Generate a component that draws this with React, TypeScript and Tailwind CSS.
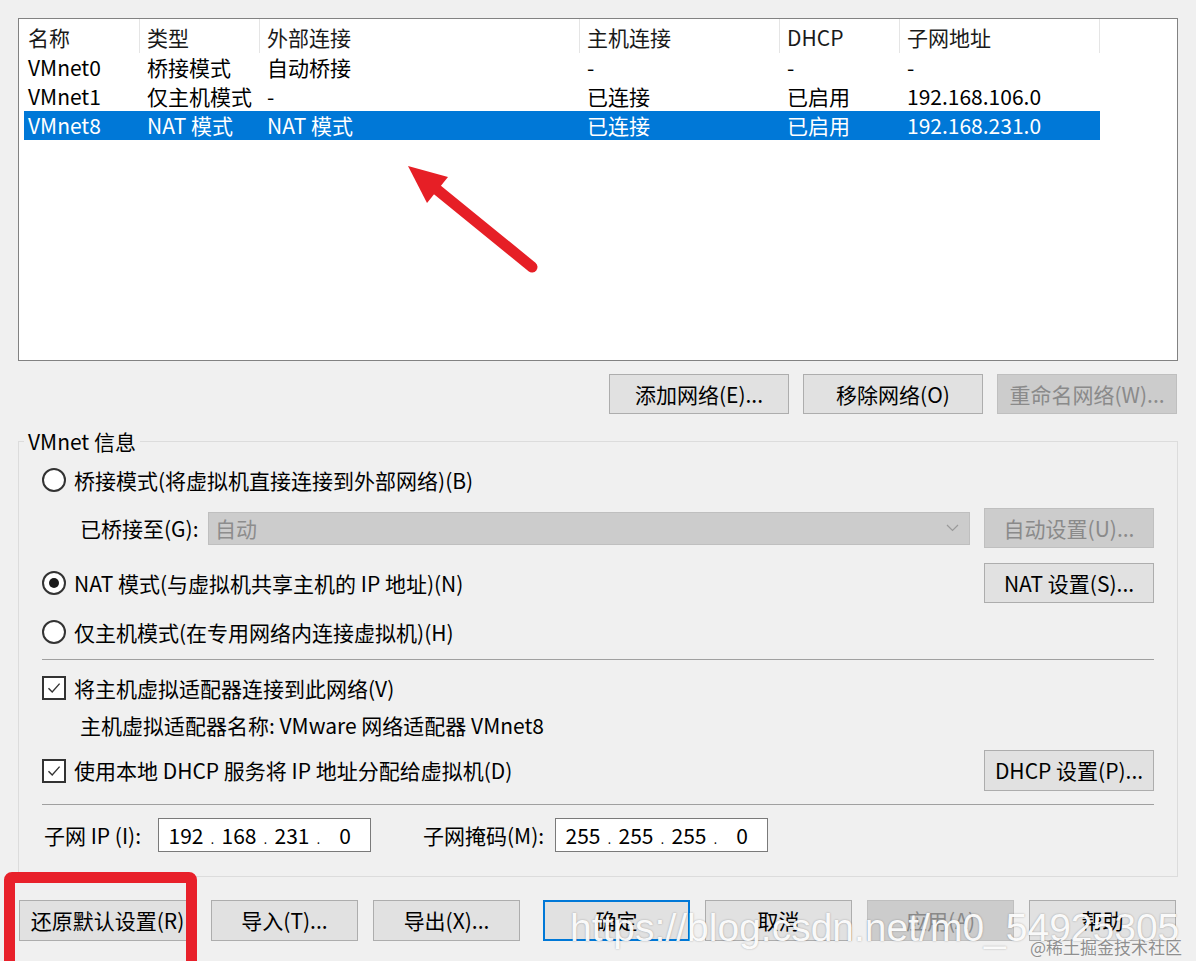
import React from "react";

function Radio({ checked }: { checked?: boolean }) {
  return (
    <span className="flex h-[24px] w-[24px] shrink-0 items-center justify-center rounded-full border-2 border-[#333333] bg-white">
      {checked && <span className="h-[10px] w-[10px] rounded-full bg-[#1a1a1a]" />}
    </span>
  );
}

function Check() {
  return (
    <span className="flex h-[24px] w-[24px] shrink-0 items-center justify-center border-2 border-[#333333] bg-white">
      <svg width="16" height="16" viewBox="0 0 16 16">
        <path d="M2.5 8.2 L6.2 12 L13.6 3.6" fill="none" stroke="#333333" strokeWidth="1.4" />
      </svg>
    </span>
  );
}

function Btn({
  children,
  className = "",
  kind = "normal",
}: {
  children: React.ReactNode;
  className?: string;
  kind?: "normal" | "disabled" | "primary";
}) {
  const look =
    kind === "disabled"
      ? "border border-[#bfbfbf] bg-[#cccccc] text-[#8a8a8a]"
      : kind === "primary"
      ? "border-2 border-[#0078d7] bg-[#e1e1e1] text-black"
      : "border border-[#adadad] bg-[#e1e1e1] text-black";
  return (
    <div className={`flex shrink-0 items-center justify-center leading-none ${look} ${className}`}>
      {children}
    </div>
  );
}

function IpBox({ parts }: { parts: string[] }) {
  return (
    <div className="flex h-[34px] w-[213px] shrink-0 items-center border border-[#7a7a7a] bg-white pl-[4px]">
      {parts.map((p, i) => (
        <React.Fragment key={i}>
          <span className="w-[46px] text-center leading-none">{p}</span>
          {i < 3 && <span className="w-[7px] self-end pb-[6px] text-center text-[12px] leading-none">.</span>}
        </React.Fragment>
      ))}
    </div>
  );
}

const colCls = [
  "w-[116px] pl-[4px]",
  "w-[120px] pl-[7px]",
  "w-[320px] pl-[7px]",
  "w-[200px] pl-[7px]",
  "w-[120px] pl-[7px]",
  "w-[200px] pl-[7px]",
];

const header = ["名称", "类型", "外部连接", "主机连接", "DHCP", "子网地址"];
const rows = [
  ["VMnet0", "桥接模式", "自动桥接", "-", "-", "-"],
  ["VMnet1", "仅主机模式", "-", "已连接", "已启用", "192.168.106.0"],
  ["VMnet8", "NAT 模式", "NAT 模式", "已连接", "已启用", "192.168.231.0"],
];

export default function App() {
  return (
    <div className="relative h-[961px] w-[1196px] overflow-hidden bg-[#f0f0f0] text-[21px] text-black font-['Noto_Sans_CJK_SC','Noto_Sans',sans-serif]">
      {/* Network list */}
      <div className="ml-[18px] mt-[18px] h-[343px] w-[1160px] border border-[#828282] bg-white pl-[5px]">
        <div className="flex h-[34px]">
          {header.map((h, i) => (
            <div
              key={i}
              className={`flex h-full items-center border-r border-[#e5e5e5] pt-[2px] leading-none text-[#1a1a1a] ${colCls[i]}`}
            >
              {h}
            </div>
          ))}
        </div>
        {rows.map((r, ri) => (
          <div
            key={ri}
            className={`flex h-[29px] w-[1076px] ${ri === 2 ? "bg-[#0078d7] text-white" : "text-black"}`}
          >
            {r.map((c, ci) => (
              <div key={ci} className={`flex h-full items-center leading-none ${colCls[ci]}`}>
                {c}
              </div>
            ))}
          </div>
        ))}
      </div>

      {/* List buttons */}
      <div className="mt-[13px] flex justify-end gap-[14px] pr-[19px]">
        <Btn className="h-[40px] w-[180px]">添加网络(E)...</Btn>
        <Btn className="h-[40px] w-[180px]">移除网络(O)</Btn>
        <Btn className="h-[40px] w-[180px]" kind="disabled">
          重命名网络(W)...
        </Btn>
      </div>

      {/* VMnet info */}
      <fieldset className="ml-[18px] mt-[13px] w-[1160px] border border-[#dcdcdc] pb-[24px]">
        <legend className="ml-[5px] px-[4px] leading-[28px]">VMnet 信息</legend>

        <div className="px-[23px]">
          <div className="mt-[5px] flex h-[40px] items-center">
            <Radio />
            <span className="ml-[8px] leading-none">桥接模式(将虚拟机直接连接到外部网络)(B)</span>
          </div>

          <div className="mt-[8px] flex h-[40px] items-center">
            <span className="w-[166px] shrink-0 pl-[38px] leading-none">已桥接至(G):</span>
            <div className="flex h-[33px] w-[762px] items-center justify-between border border-[#bfbfbf] bg-[#cccccc] pl-[6px] pr-[10px]">
              <span className="leading-none text-[#8d8d8d]">自动</span>
              <svg width="13" height="8" viewBox="0 0 13 8">
                <path d="M1 1 L6.5 6.5 L12 1" fill="none" stroke="#9a9a9a" strokeWidth="1.2" />
              </svg>
            </div>
            <Btn className="ml-auto h-[40px] w-[170px]" kind="disabled">
              自动设置(U)...
            </Btn>
          </div>

          <div className="mt-[15px] flex h-[40px] items-center">
            <Radio checked />
            <span className="ml-[8px] leading-none">NAT 模式(与虚拟机共享主机的 IP 地址)(N)</span>
            <Btn className="ml-auto h-[40px] w-[170px]">NAT 设置(S)...</Btn>
          </div>

          <div className="mt-[9px] flex h-[40px] items-center">
            <Radio />
            <span className="ml-[8px] leading-none">仅主机模式(在专用网络内连接虚拟机)(H)</span>
          </div>

          <div className="mt-[7px] h-px bg-[#a0a0a0]" />

          <div className="mt-[8px] flex h-[40px] items-center">
            <Check />
            <span className="ml-[8px] leading-none">将主机虚拟适配器连接到此网络(V)</span>
          </div>

          <div className="mt-[2px] flex h-[30px] items-center pl-[38px]">
            <span className="leading-none">主机虚拟适配器名称: VMware 网络适配器 VMnet8</span>
          </div>

          <div className="mt-[10px] flex h-[41px] items-center">
            <Check />
            <span className="ml-[8px] leading-none">使用本地 DHCP 服务将 IP 地址分配给虚拟机(D)</span>
            <Btn className="ml-auto h-[41px] w-[170px]">DHCP 设置(P)...</Btn>
          </div>

          <div className="mt-[13px] h-px bg-[#a0a0a0]" />

          <div className="mt-[13px] flex h-[34px] items-center">
            <span className="w-[116px] shrink-0 pl-[2px] leading-none">子网 IP (I):</span>
            <IpBox parts={["192", "168", "231", "0"]} />
            <span className="ml-[52px] w-[132px] shrink-0 leading-none">子网掩码(M):</span>
            <IpBox parts={["255", "255", "255", "0"]} />
          </div>
        </div>
      </fieldset>

      {/* Dialog buttons */}
      <div className="mt-[23px] flex pl-[19px]">
        <Btn className="h-[41px] w-[177px]">还原默认设置(R)</Btn>
        <Btn className="ml-[15px] h-[41px] w-[147px]">导入(T)...</Btn>
        <Btn className="ml-[15px] h-[41px] w-[147px]">导出(X)...</Btn>
        <Btn className="ml-[23px] h-[41px] w-[147px]" kind="primary">
          确定
        </Btn>
        <Btn className="ml-[15px] h-[41px] w-[147px]">取消</Btn>
        <Btn className="ml-[15px] h-[41px] w-[147px]" kind="disabled">
          应用(A)
        </Btn>
        <Btn className="ml-[15px] h-[41px] w-[147px]">帮助</Btn>
      </div>

      {/* Annotations */}
      <svg className="absolute left-[395px] top-[155px]" width="150" height="125" viewBox="0 0 150 125">
        <line x1="137" y1="112" x2="40" y2="33" stroke="#e61f26" strokeWidth="11" strokeLinecap="round" />
        <polygon points="13,11 32,48 53,22" fill="#e61f26" />
      </svg>

      <div className="absolute left-[4px] top-[872px] h-[110px] w-[193px] rounded-[8px] border-[11px] border-[#e8202a]" />

      <div className="absolute left-[570px] top-[905px] whitespace-nowrap text-[39px] leading-[45px] text-white/95 font-['Liberation_Sans',Arial,sans-serif] [text-shadow:0_0_2px_rgba(0,0,0,0.3)]">
        https://blog.csdn.net/m0_54925305
      </div>
      <div className="absolute left-[1030px] top-[935px] whitespace-nowrap text-[17px] leading-[24px] text-[#8f8f8f] [text-shadow:0_0_2px_rgba(255,255,255,0.9)]">
        @稀土掘金技术社区
      </div>
    </div>
  );
}
